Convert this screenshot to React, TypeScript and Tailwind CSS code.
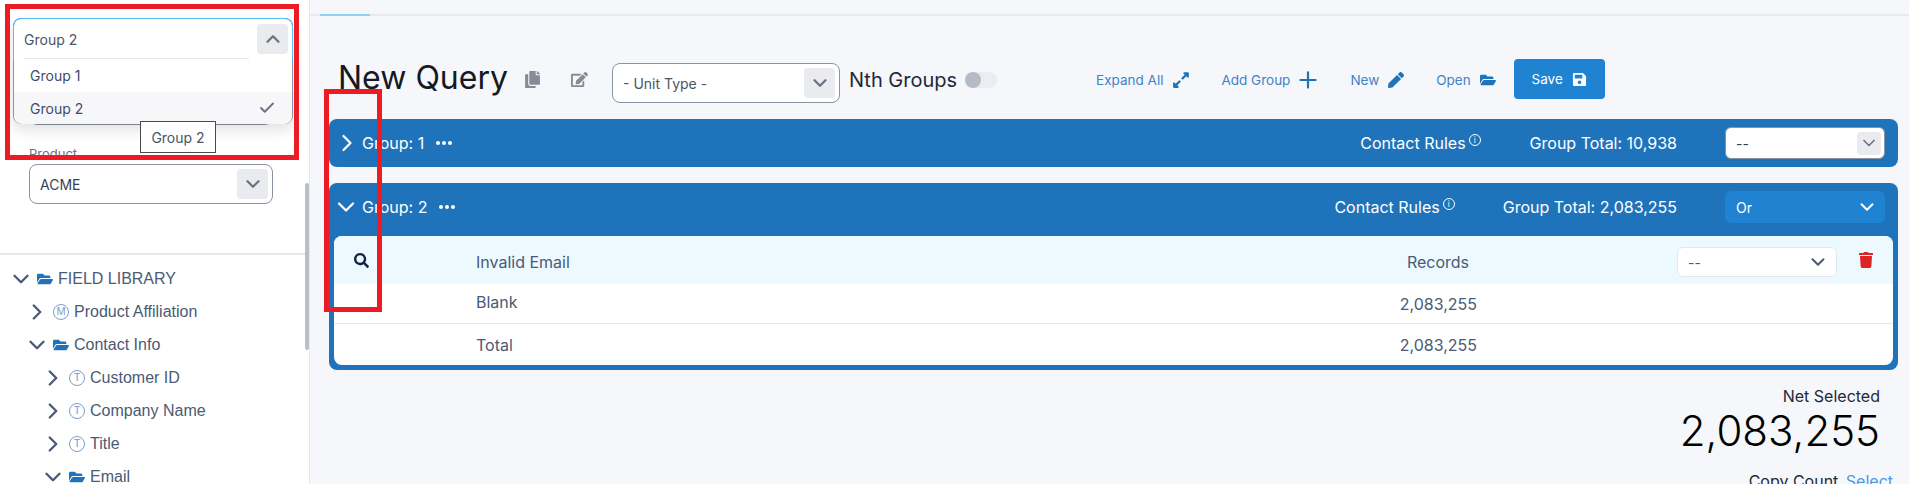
import { ChevronDown, ChevronRight, ChevronUp, Check, Plus } from 'lucide-react';
import { FaCopy, FaEdit, FaExpandAlt, FaFolderOpen, FaPen, FaSave, FaSearch, FaTrash } from 'react-icons/fa';

const Badge = ({ letter }: { letter: string }) => (
    <span className="flex h-[16px] w-[16px] shrink-0 items-center justify-center rounded-full border border-[#7e9ccb] text-[11px] leading-none text-[#7e9ccb]">{letter}</span>
);

const InfoIcon = () => (
    <span className="mb-[7px] ml-[3px] flex h-[12px] w-[12px] items-center justify-center rounded-full border border-white text-[8px] leading-none text-white">i</span>
);

const Row = ({ indent, open, icon, label }: { indent: number; open?: boolean; icon: React.ReactNode; label: string }) => (
    <div className="flex h-[33px] items-center text-[#4b5a75]" style={{ paddingLeft: indent }}>
        <span className="flex w-[23px] shrink-0 items-center">
            {open ? <ChevronDown size={26} strokeWidth={2.2} className="-ml-[6px] shrink-0 text-[#4b5a75]" /> : <ChevronRight size={26} strokeWidth={2.2} className="-ml-[6px] shrink-0 text-[#4b5a75]" />}
        </span>
        {icon}
        <span className="ml-[5px] whitespace-nowrap">{label}</span>
    </div>
);

const Folder = () => <FaFolderOpen size={16} color="#1f73bb" className="shrink-0" />;

const Sidebar = () => (
    <aside className="relative flex h-full w-[310px] shrink-0 flex-col border-r border-[#e5e7eb] bg-white">
        <div className="h-[255px] shrink-0 border-b-2 border-[#e5e7eb] px-[29px] pt-[85px] font-['Inter',sans-serif]">
            <div className="h-[40px] w-[244px] rounded-lg border border-[#8b93a1] bg-white" />
            <div className="mt-[20px] h-[19px] text-[13px] leading-[19px] text-[#6b7280]">Product</div>
            <div className="flex h-[40px] w-[244px] items-center justify-between rounded-lg border border-[#8b93a1] bg-white pl-[10px] pr-[4px] text-[14px] text-[#374151]">
                ACME
                <span className="flex h-[30px] w-[31px] items-center justify-center rounded bg-[#e9ebee]"><ChevronDown size={22} strokeWidth={2.5} className="text-[#6b7280]" /></span>
            </div>
        </div>
        <div className="min-h-0 flex-1 pl-[14px] pt-[7px] font-['Liberation_Sans',sans-serif] text-[16px]">
            <Row indent={0} open icon={<Folder />} label="FIELD LIBRARY" />
            <Row indent={16} icon={<Badge letter="M" />} label="Product Affiliation" />
            <Row indent={16} open icon={<Folder />} label="Contact Info" />
            <Row indent={32} icon={<Badge letter="T" />} label="Customer ID" />
            <Row indent={32} icon={<Badge letter="T" />} label="Company Name" />
            <Row indent={32} icon={<Badge letter="T" />} label="Title" />
            <Row indent={32} open icon={<Folder />} label="Email" />
        </div>

        {/* scrollbar thumb */}
        <div className="absolute left-[305px] top-[183px] h-[167px] w-[4px] rounded-full bg-[#b9c0ca]" />

        {/* open select */}
        <div className="absolute left-[13px] top-[18px] z-10 h-[106px] w-[280px] rounded-lg border border-[#8b93a1] bg-white font-['Inter',sans-serif] text-[14px] shadow-[0_6px_14px_rgba(0,0,0,0.12)]">
            <div className="absolute -left-px -top-px h-[43px] w-[280px] rounded-t-lg border-x border-t border-[#55bdf3]" />
            <div className="flex h-[39px] items-center justify-between pl-[10px] pr-[4px] pt-[1px] text-[#4b5563]">
                Group 2
                <span className="flex h-[30px] w-[31px] items-center justify-center rounded bg-[#e9ebee]"><ChevronUp size={22} strokeWidth={2.5} className="text-[#6b7280]" /></span>
            </div>
            <div className="ml-[10px] w-[225px] border-t border-[#e5e7eb]" />
            <div className="flex h-[33px] items-center pl-[16px] text-[#3e4c6b]">Group 1</div>
            <div className="flex h-[32px] items-center justify-between rounded-b-lg bg-[#f7f7fa] pl-[16px] pr-[16px] text-[#3e4c6b]">
                Group 2
                <Check size={18} strokeWidth={2.5} className="text-[#6b7280]" />
            </div>
        </div>
        <div className="absolute left-[140px] top-[121px] z-20 flex h-[32px] w-[76px] items-center justify-center border border-[#4b4b4b] bg-white font-['Inter',sans-serif] text-[14px] text-[#4b5563]">Group 2</div>
    </aside>
);

const ToolLink = ({ label, icon, className }: { label: string; icon: React.ReactNode; className: string }) => (
    <div className={`mb-[2px] flex items-center text-[13.5px] text-[#3f83c9] ${className}`}>
        <span className="whitespace-nowrap">{label}</span>
        {icon}
    </div>
);

const Toolbar = () => (
    <div className="flex h-[44px] items-center">
        <h1 className="mb-[6px] ml-[9px] w-[186px] text-[32px] leading-none whitespace-nowrap text-[#16191f]">New Query</h1>
        <FaCopy size={17} color="#878c94" className="mb-[4px]" />
        <FaEdit size={17} color="#878c94" className="mb-[4px] ml-[30px]" />
        <div className="ml-[24px] mt-[4px] flex h-[40px] w-[228px] items-center justify-between rounded-lg border border-[#8b93a1] bg-white pl-[10px] pr-[4px] text-[14px] text-[#4b5563]">
            - Unit Type -
            <span className="flex h-[30px] w-[31px] items-center justify-center rounded bg-[#e9ebee]"><ChevronDown size={22} strokeWidth={2.5} className="text-[#6b7280]" /></span>
        </div>
        <span className="mb-[2px] ml-[9px] text-[20px] whitespace-nowrap text-[#1f2937]">Nth Groups</span>
        <span className="mb-[2px] ml-[8px] flex h-[16px] w-[32px] rounded-full bg-[#ebedf0]"><span className="h-[16px] w-[16px] rounded-full bg-[#b5bbc6]" /></span>
        <ToolLink className="ml-[99px]" label="Expand All" icon={<FaExpandAlt size={18} className="ml-[9px]" color="#1f73bb" />} />
        <ToolLink className="ml-[31px]" label="Add Group" icon={<Plus size={26} strokeWidth={2} className="-mr-[6px] ml-[5px]" color="#1f73bb" />} />
        <ToolLink className="ml-[35px]" label="New" icon={<FaPen size={16} className="ml-[9px]" color="#1f73bb" />} />
        <ToolLink className="ml-[32px]" label="Open" icon={<FaFolderOpen size={16} className="ml-[9px]" color="#1f73bb" />} />
        <button className="mb-[4px] ml-[18px] flex h-[40px] w-[91px] items-center justify-center gap-[9px] rounded bg-[#2083d2] text-[13.5px] text-white">
            Save <FaSave size={15} />
        </button>
    </div>
);

const GroupHead = ({ open, name, total, rulesWidth, children }: { open?: boolean; name: string; total: string; rulesWidth: string; children: React.ReactNode }) => (
    <div className="flex h-[48px] items-center pl-[10px] pr-[13px] text-[16px] text-white">
        <span className="flex w-[23px] shrink-0 items-center">
            {open ? <ChevronDown size={28} strokeWidth={1.9} className="-ml-[7px] shrink-0" /> : <ChevronRight size={28} strokeWidth={1.9} className="-ml-[6px] shrink-0" />}
        </span>
        <span>{name}</span>
        <span className="ml-[12px] flex gap-[2px]">
            <i className="h-[4px] w-[4px] rounded-full bg-white" />
            <i className="h-[4px] w-[4px] rounded-full bg-white" />
            <i className="h-[4px] w-[4px] rounded-full bg-white" />
        </span>
        <span className="ml-auto flex items-center">Contact Rules<InfoIcon /></span>
        <span className={`${rulesWidth} whitespace-nowrap`}>Group Total: {total}</span>
        <div className="ml-[48px] text-[14px]">{children}</div>
    </div>
);

const Groups = () => (
    <>
        <section className="mt-[16px] rounded-lg bg-[#1f73bb]">
            <GroupHead name="Group: 1" total="10,938" rulesWidth="ml-[49px]">
                <div className="flex h-[32px] w-[160px] items-center justify-between rounded-md border border-[#8b93a1] bg-white pl-[10px] pr-[3px] text-[#374151]">
                    --
                    <span className="flex h-[23px] w-[24px] items-center justify-center rounded bg-[#e9ebee]"><ChevronDown size={20} strokeWidth={2} className="text-[#6b7280]" /></span>
                </div>
            </GroupHead>
        </section>
        <section className="mt-[16px] rounded-lg bg-[#1f73bb] px-[5px] pb-[5px]">
            <div className="-mx-[5px] mb-[5px]">
                <GroupHead open name="Group: 2" total="2,083,255" rulesWidth="ml-[48px]">
                    <div className="flex h-[32px] w-[160px] items-center justify-between rounded-md bg-[#2083d2] pl-[11px] pr-[7px]">
                        Or
                        <ChevronDown size={22} strokeWidth={2.2} />
                    </div>
                </GroupHead>
            </div>
            <div className="overflow-hidden rounded-lg bg-white text-[16px] text-[#4b5a75]">
                <div className="relative flex h-[48px] items-center bg-[#ecf9ff]">
                    <FaSearch size={15} color="#16233f" className="absolute left-[20px] top-[17px]" />
                    <span className="ml-[142px] mt-[4px]">Invalid Email</span>
                    <span className="absolute right-[424px] top-[14px]">Records</span>
                    <div className="absolute left-[1343px] top-[11px] flex h-[30px] w-[160px] items-center justify-between rounded-md border border-[#e5e7eb] bg-white pl-[10px] pr-[7px] text-[14px]">
                        --
                        <ChevronDown size={22} strokeWidth={2.2} />
                    </div>
                    <FaTrash size={16} color="#dc2626" className="absolute left-[1524px] top-[16px]" />
                </div>
                <div className="flex h-[40px] items-center justify-between border-b border-[#e5e7eb] pl-[142px] pr-[416px]">
                    <span className="-mt-[4px]">Blank</span><span>2,083,255</span>
                </div>
                <div className="flex h-[41px] items-center justify-between pl-[142px] pr-[416px]">
                    <span>Total</span><span>2,083,255</span>
                </div>
            </div>
        </section>
    </>
);

export default function App() {
    return (
        <div className="relative flex h-[484px] w-[1909px] overflow-hidden bg-[#f5f7fb] font-['Inter',sans-serif]">
            <Sidebar />
            <main className="min-w-0 flex-1">
                <div className="h-[16px] border-b-2 border-[#e8eaee]">
                    <div className="ml-[10px] h-[16px] w-[50px] border-b-2 border-[#8fd0f5]" />
                </div>
                <div className="pl-[19px] pr-[11px] pt-[43px]">
                    <Toolbar />
                    <Groups />
                    <div className="mt-[16px] pr-[18px] text-right">
                        <div className="text-[16px] leading-[20px] text-[#1f2937]">Net Selected</div>
                        <div className="text-[42px] font-light leading-[50px] text-black">2,083,255</div>
                        <div className="-mr-[13px] mt-[15px] text-[16px] leading-[20px] text-[#1f2937]">Copy Count <span className="ml-[3px] text-[#4a9be8]">Select</span></div>
                    </div>
                </div>
            </main>

            {/* red review annotations on the screenshot */}
            <div className="pointer-events-none absolute left-[5px] top-[4px] z-30 h-[156px] w-[294px] border-[5px] border-[#ed1c24]" />
            <div className="pointer-events-none absolute left-[324px] top-[89px] z-30 h-[223px] w-[58px] border-[5px] border-[#ed1c24]" />
        </div>
    );
}
